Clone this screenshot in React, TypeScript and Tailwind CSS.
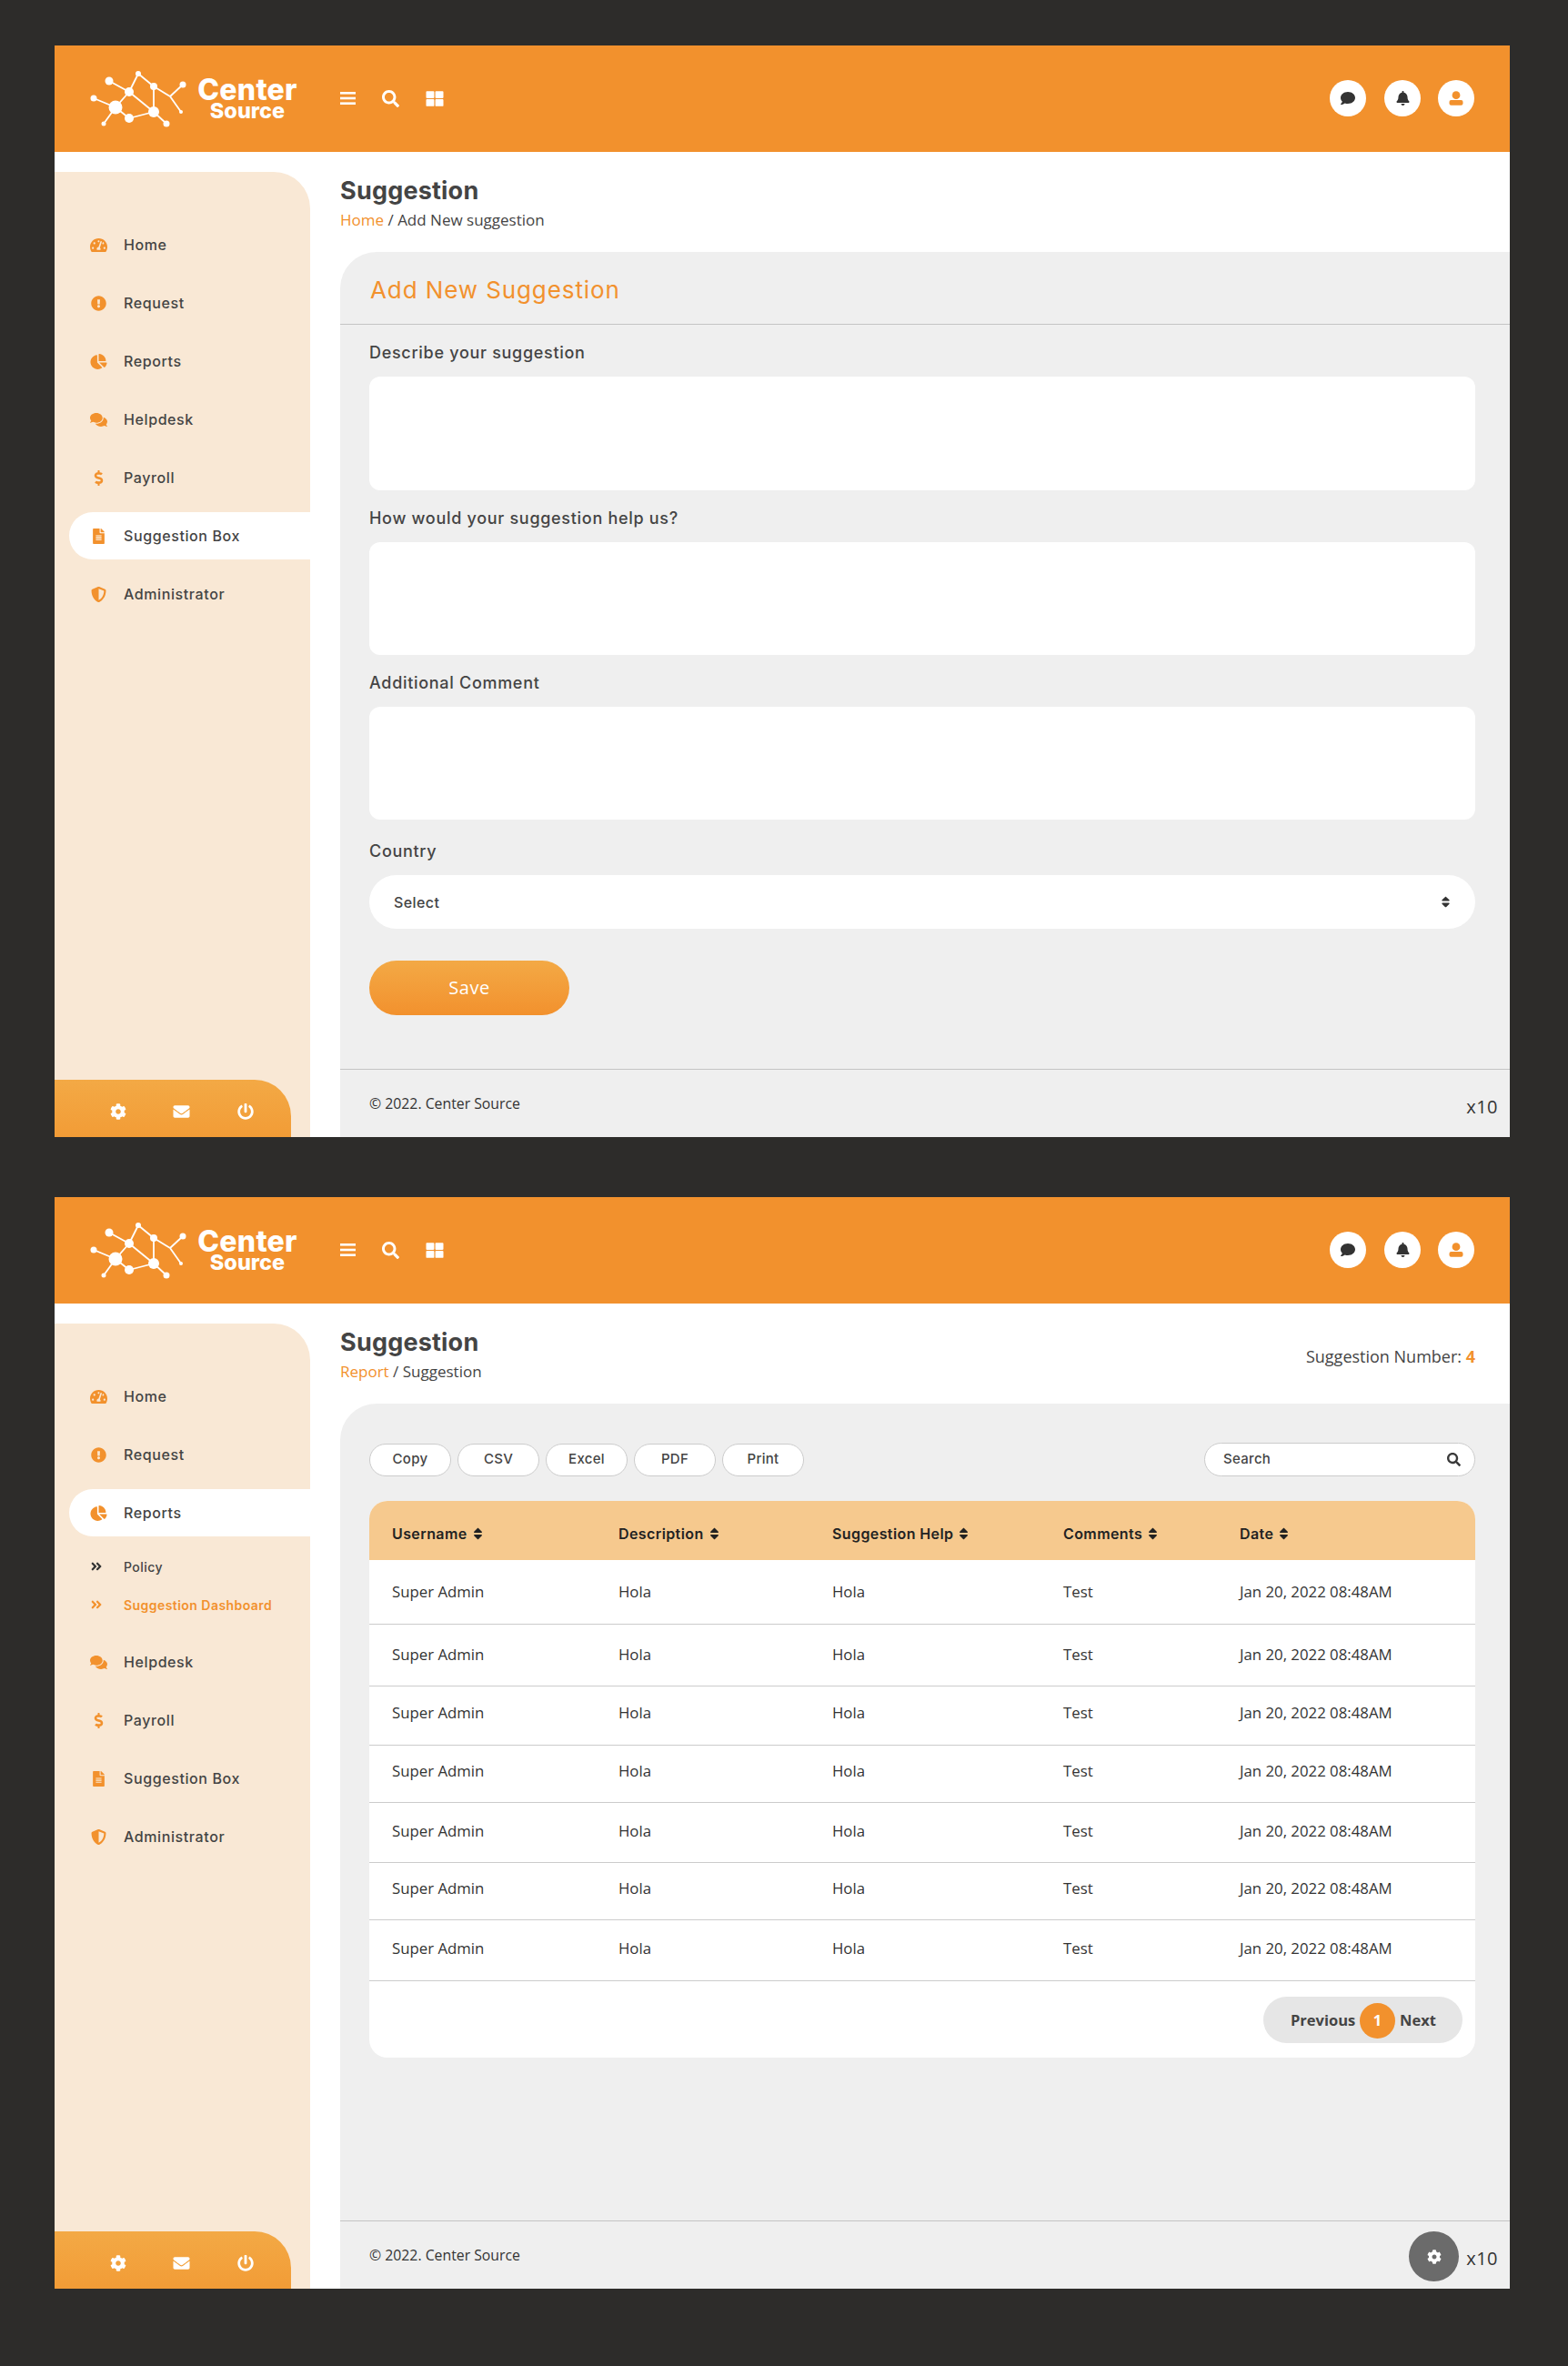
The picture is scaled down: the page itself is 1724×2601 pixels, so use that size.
import React from "react";
import {
  FaTachometerAlt, FaExclamationCircle, FaChartPie, FaComments, FaDollarSign, FaFileAlt, FaShieldAlt,
  FaCog, FaEnvelope, FaPowerOff, FaSearch, FaThLarge, FaBell, FaComment, FaSort, FaAngleDoubleRight,
} from "react-icons/fa";

const sans = "font-['Open_Sans',sans-serif]";
const mont = "font-['Inter',sans-serif]";

function Logo() {
  const edges = [
    [30, 19, 52, 31], [13, 38, 37, 48], [37, 48, 52, 31], [52, 31, 62, 11], [62, 11, 79, 25], [79, 25, 97, 36],
    [97, 36, 111, 23], [97, 36, 109, 53], [79, 25, 79, 53], [52, 31, 79, 53], [37, 48, 52, 60], [52, 60, 79, 53],
    [79, 53, 93, 66], [37, 48, 24, 66],
  ];
  const nodes = [
    [30, 19, 4.5], [13, 38, 3.5], [37, 48, 7.5], [52, 31, 5], [62, 11, 3], [79, 25, 4], [111, 23, 3.5], [109, 53, 2],
    [79, 53, 6], [52, 60, 5], [93, 66, 3.5], [24, 66, 2.5],
  ];
  return (
    <svg viewBox="0 0 125 80" className="w-[125px] h-[80px] shrink-0" fill="#fff">
      {edges.map((e, i) => (
        <line key={i} x1={e[0]} y1={e[1]} x2={e[2]} y2={e[3]} stroke="#fff" strokeWidth="1.8" />
      ))}
      {nodes.map((n, i) => (
        <circle key={i} cx={n[0]} cy={n[1]} r={n[2]} />
      ))}
    </svg>
  );
}

function Header() {
  return (
    <header className="h-[117px] shrink-0 bg-[#f2912d] flex items-center pr-[39px] text-white">
      <div className="w-[314px] pl-[30px] shrink-0 flex items-center mt-[3px]">
        <Logo />
        <div className={`${mont} ml-[1px] mt-[-3px] w-[112px] flex flex-col items-center font-extrabold`}>
          <span className="text-[32px] leading-[26px] tracking-[0.3px]">Center</span>
          <span className="text-[23.5px] leading-[20px]">Source</span>
        </div>
      </div>
      <div className="flex items-center mt-[-1px]">
        <svg viewBox="0 0 17 14" className="w-[17px] h-[14px]" fill="#fff">
          <rect x="0" y="0" width="17" height="2.6" />
          <rect x="0" y="5.7" width="17" height="2.6" />
          <rect x="0" y="11.4" width="17" height="2.6" />
        </svg>
        <FaSearch className="w-[19px] h-[19px] ml-[29px]" />
        <FaThLarge className="w-[20px] h-[19px] ml-[29px]" />
      </div>
      <div className="ml-auto flex items-center gap-[20px] mt-[-1px]">
        <div className="w-[40px] h-[40px] rounded-full bg-white flex items-center justify-center">
          <FaComment className="w-[18px] h-[16px] text-[#333]" />
        </div>
        <div className="w-[40px] h-[40px] rounded-full bg-white flex items-center justify-center">
          <FaBell className="w-[15px] h-[16px] text-[#333]" />
        </div>
        <div className="w-[40px] h-[40px] rounded-full bg-white flex items-center justify-center -ml-[1px]">
          <svg viewBox="0 0 16 16" className="w-[16px] h-[16px]" fill="#f2912d">
            <circle cx="8" cy="4.7" r="4.4" />
            <rect x="0.5" y="10" width="15" height="5.8" rx="2" />
          </svg>
        </div>
      </div>
    </header>
  );
}

const items = [
  { label: "Home", Icon: FaTachometerAlt },
  { label: "Request", Icon: FaExclamationCircle },
  { label: "Reports", Icon: FaChartPie },
  { label: "Helpdesk", Icon: FaComments },
  { label: "Payroll", Icon: FaDollarSign },
  { label: "Suggestion Box", Icon: FaFileAlt },
  { label: "Administrator", Icon: FaShieldAlt },
];

function Sidebar({ active }: { active: string }) {
  return (
    <aside className="w-[281px] shrink-0 mt-[22px] bg-[#f9e8d5] rounded-tr-[40px] flex flex-col justify-between">
      <nav className="pt-[48px]">
        {items.map(({ label, Icon }) => (
          <div key={label}>
            <div className="h-[64px] flex items-center pl-[16px]">
              <div
                className={`h-[52px] flex-1 flex items-center pl-[23px] rounded-l-[26px] ${mont} font-medium text-[16px] tracking-[0.6px] text-[#444] ${label === active ? "bg-white" : ""}`}
              >
                <span className="w-[37px] shrink-0">
                  <Icon className="w-[19px] h-[17px] text-[#f2912d]" />
                </span>
                {label}
              </div>
            </div>
            {active === "Reports" && label === "Reports" && (
              <div className={`${mont} mt-[6px] mb-[10px] text-[14px] tracking-[0.45px]`}>
                <div className="h-[42px] flex items-center pl-[39px] text-[#444] font-medium">
                  <span className="w-[37px] shrink-0">
                    <FaAngleDoubleRight className="w-[14px] h-[14px] text-[#333]" />
                  </span>
                  Policy
                </div>
                <div className="h-[42px] flex items-center pl-[39px] text-[#f2912d] font-semibold">
                  <span className="w-[37px] shrink-0">
                    <FaAngleDoubleRight className="w-[14px] h-[14px]" />
                  </span>
                  Suggestion Dashboard
                </div>
              </div>
            )}
          </div>
        ))}
      </nav>
      <div className="w-[260px] h-[63px] rounded-tr-[40px] bg-gradient-to-b from-[#f3a945] to-[#f29c36] flex items-center pl-[61px] pt-[6px] text-white">
        <FaCog className="w-[18px] h-[18px]" />
        <FaEnvelope className="w-[19px] h-[18px] ml-[51px]" />
        <FaPowerOff className="w-[18px] h-[18px] ml-[52px]" />
      </div>
    </aside>
  );
}

function PageTitle({ crumbA, crumbB, right }: { crumbA: string; crumbB: string; right?: React.ReactNode }) {
  return (
    <div className="h-[110px] shrink-0 flex justify-between pr-[38px]">
      <div>
        <h1 className={`${mont} font-bold text-[27px] leading-[30px] tracking-[0.2px] mt-[28px] text-[#444]`}>Suggestion</h1>
        <p className={`${sans} text-[17px] leading-[24px] mt-[5px] text-[#444]`}>
          <span className="text-[#f2912d]">{crumbA}</span> / {crumbB}
        </p>
      </div>
      {right}
    </div>
  );
}

function PanelFooter({ gear }: { gear?: boolean }) {
  return (
    <footer className={`relative h-[75px] shrink-0 mt-auto border-t border-[#c4c4c4] flex items-center pl-[32px] ${sans} text-[15.8px] text-[#333]`}>
      <span className="mt-[2px]">© 2022. Center Source</span>
      <span className="absolute right-[13px] top-[27px] text-[20px] leading-[28px] tracking-[0.5px]">x10</span>
      {gear && (
        <div className="absolute right-[56px] top-[11px] w-[55px] h-[55px] rounded-full bg-[#6b6b6b] flex items-center justify-center">
          <FaCog className="w-[16px] h-[16px] text-white" />
        </div>
      )}
    </footer>
  );
}

function Field({ label }: { label: string }) {
  return <label className={`block h-[57px] pt-[20px] ${mont} font-medium text-[18px] leading-[22px] tracking-[0.7px] text-[#444]`}>{label}</label>;
}

function FormScreen() {
  return (
    <div className="flex-1 flex flex-col bg-[#efefef] rounded-tl-[40px]">
      <div className="h-[80px] shrink-0 border-b border-[#c4c4c4] flex items-center pl-[33px] pt-[4px]">
        <h2 className={`${mont} text-[26px] tracking-[0.9px] text-[#f2912d]`}>Add New Suggestion</h2>
      </div>
      <form className="pl-[32px] pr-[38px]">
        <Field label="Describe your suggestion" />
        <textarea className="block w-full h-[125px] rounded-[12px] bg-white resize-none" />
        <Field label="How would your suggestion help us?" />
        <textarea className="block w-full h-[124px] rounded-[12px] bg-white resize-none" />
        <Field label="Additional Comment" />
        <textarea className="block w-full h-[124px] rounded-[12px] bg-white resize-none" />
        <div className="pt-[4px]">
          <Field label="Country" />
        </div>
        <div className={`h-[59px] rounded-full bg-white flex items-center justify-between pl-[27px] pr-[26px] ${mont} font-medium text-[16px] tracking-[0.4px] text-[#444]`}>
          Select
          <FaSort className="w-[13px] h-[15px] text-[#333]" />
        </div>
        <button type="button" className={`mt-[35px] w-[220px] h-[60px] rounded-[30px] bg-gradient-to-b from-[#f3a945] to-[#f2912d] ${sans} text-[20px] font-medium tracking-[0.5px] text-white`}>
          Save
        </button>
      </form>
      <PanelFooter />
    </div>
  );
}

const rows = [
  { h: "h-[70px]", pb: "pb-[0px]" },
  { h: "h-[68px]", pb: "pb-[0px]" },
  { h: "h-[65px]", pb: "pb-[5px]" },
  { h: "h-[63px]", pb: "pb-[6px]" },
  { h: "h-[66px]", pb: "pb-[3px]" },
  { h: "h-[63px]", pb: "pb-[6px]" },
  { h: "h-[67px]", pb: "pb-[3px]" },
];

function SortHead({ label, className }: { label: string; className: string }) {
  return (
    <th className={`${className} pt-[6px] text-left font-semibold`}>
      <span className="inline-flex items-center gap-[6px]">
        {label}
        <FaSort className="w-[11px] h-[16px]" />
      </span>
    </th>
  );
}

function TableScreen() {
  return (
    <div className="flex-1 flex flex-col bg-[#efefef] rounded-tl-[40px]">
      <div className="pl-[32px] pr-[38px] pt-[43px]">
        <div className="flex items-center justify-between h-[37px]">
          <div className="flex gap-[7px]">
            {["Copy", "CSV", "Excel", "PDF", "Print"].map((b) => (
              <button key={b} type="button" className={`w-[90px] h-[36px] rounded-full bg-white border border-[#ccc] ${mont} font-medium text-[15px] tracking-[0.3px] text-[#444]`}>
                {b}
              </button>
            ))}
          </div>
          <div className={`w-[298px] h-[37px] rounded-full bg-white border border-[#ccc] flex items-center justify-between pl-[20px] pr-[15px] ${mont} font-medium text-[15px] tracking-[0.3px] text-[#444]`}>
            Search
            <FaSearch className="w-[15px] h-[15px] text-[#3a3a3a]" />
          </div>
        </div>
        <div className="mt-[27px] bg-white rounded-[20px] overflow-hidden pb-[16px]">
          <table className="w-full table-fixed">
            <thead>
              <tr className={`h-[65px] bg-[#f6c98e] ${mont} text-[16px] tracking-[0.4px] text-[#222]`}>
                <SortHead label="Username" className="w-[249px] pl-[25px]" />
                <SortHead label="Description" className="w-[235px] pl-[25px]" />
                <SortHead label="Suggestion Help" className="w-[254px] pl-[25px]" />
                <SortHead label="Comments" className="w-[194px] pl-[25px]" />
                <SortHead label="Date" className="pl-[25px]" />
              </tr>
            </thead>
            <tbody className={`${sans} text-[16.8px] text-[#333]`}>
              {rows.map((r, i) => (
                <tr key={i} className={`${r.h} border-b border-[#ccc]`}>
                  <td className={`pl-[25px] ${r.pb}`}>Super Admin</td>
                  <td className={`pl-[25px] ${r.pb}`}>Hola</td>
                  <td className={`pl-[25px] ${r.pb}`}>Hola</td>
                  <td className={`pl-[25px] ${r.pb}`}>Test</td>
                  <td className={`pl-[25px] ${r.pb}`}>Jan 20, 2022 08:48AM</td>
                </tr>
              ))}
            </tbody>
          </table>
          <div className="flex justify-end mt-[17px] pr-[14px]">
            <div className={`w-[219px] h-[51px] rounded-full bg-[#e6e6e6] flex items-center pl-[30px] ${sans} font-bold text-[16.5px] text-[#444]`}>
              <span className="w-[76px] mt-[2px]">Previous</span>
              <span className="w-[39px] h-[39px] rounded-full bg-[#f2912d] text-white flex items-center justify-center mt-[2px]">1</span>
              <span className="ml-[5px] mt-[2px]">Next</span>
            </div>
          </div>
        </div>
      </div>
      <PanelFooter gear />
    </div>
  );
}

function Frame({ active, children, crumbA, crumbB, right, className }: { active: string; children: React.ReactNode; crumbA: string; crumbB: string; right?: React.ReactNode; className?: string }) {
  return (
    <section className={`w-[1600px] h-[1200px] bg-white flex flex-col overflow-hidden ${className ?? ""}`}>
      <Header />
      <div className="flex-1 min-h-0 flex">
        <Sidebar active={active} />
        <main className="flex-1 ml-[33px] flex flex-col min-w-0">
          <PageTitle crumbA={crumbA} crumbB={crumbB} right={right} />
          {children}
        </main>
      </div>
    </section>
  );
}

export default function App() {
  return (
    <div className={`w-[1724px] h-[2601px] bg-[#2d2c2a] pt-[50px] pl-[60px] ${sans}`}>
      <Frame active="Suggestion Box" crumbA="Home" crumbB="Add New suggestion">
        <FormScreen />
      </Frame>
      <Frame
        className="mt-[66px]"
        active="Reports"
        crumbA="Report"
        crumbB="Suggestion"
        right={
          <p className={`${sans} text-[18px] mt-[46px] leading-[24px] text-[#444]`}>
            Suggestion Number: <span className="font-bold text-[#f2912d]">4</span>
          </p>
        }
      >
        <TableScreen />
      </Frame>
    </div>
  );
}
